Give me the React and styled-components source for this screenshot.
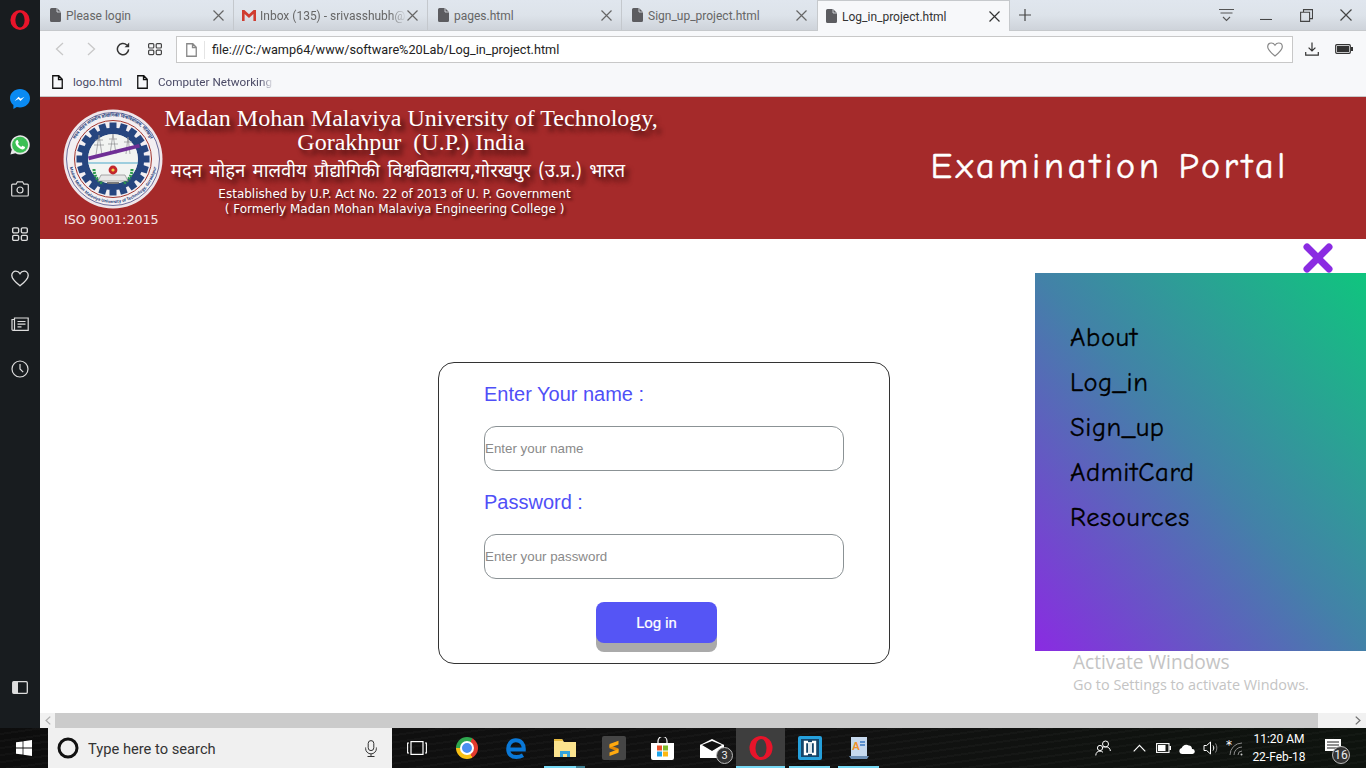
import React from 'react';
import styled, { createGlobalStyle } from 'styled-components';

const GlobalStyle = createGlobalStyle`
  html, body {
    margin: 0;
    padding: 0;
    height: 100%;
    overflow: hidden;
    background: #fff;
    font-family: "Roboto", "Liberation Sans", sans-serif;
  }
  * { box-sizing: border-box; }
`;

const COMIC = `"Comic Sans MS", "Comic Neue", cursive`;

// Window frame
const Screen = styled.div`
  width: 1366px;
  height: 768px;
  display: flex;
  flex-direction: column;
  overflow: hidden;
`;

const Upper = styled.div`
  flex: 1;
  display: flex;
  min-height: 0;
`;

const Sidebar = styled.div`
  width: 40px;
  flex: none;
  background: #181c1f;
  display: flex;
  flex-direction: column;
  align-items: center;
  padding-top: 8px;
`;

const SideSlot = styled.div`
  height: ${(p) => p.$h || 45}px;
  display: flex;
  align-items: center;
  justify-content: center;
  margin-top: ${(p) => p.$top || 0}px;
  margin-bottom: ${(p) => (p.$push ? 'auto' : '0')};
`;

const Browser = styled.div`
  flex: 1;
  min-width: 0;
  display: flex;
  flex-direction: column;
`;

// Tabs
const TabStrip = styled.div`
  height: 31px;
  flex: none;
  display: flex;
  background: linear-gradient(#e0e6ee, #dde3ea 50%, #ced3da);
  border-bottom: 1px solid #c6c9cc;
`;

const Tab = styled.div`
  width: ${(p) => (p.$active ? 193 : 194)}px;
  height: ${(p) => (p.$active ? 31 : 30)}px;
  flex: none;
  display: flex;
  align-items: center;
  padding: 0 9px 0 ${(p) => (p.$mail || p.$active ? 8 : 10)}px;
  position: relative;
  z-index: ${(p) => (p.$active ? 1 : 0)};
  margin-left: ${(p) => (p.$active ? 1 : 0)}px;
  background: ${(p) => (p.$active ? '#f7f8fa' : 'transparent')};
  border: ${(p) => (p.$active ? '1px solid #c6c9cc' : 'none')};
  border-bottom: none;
  border-right: ${(p) => (p.$active ? '1px solid #c6c9cc' : p.$sep ? '1px solid #c4c8cd' : 'none')};
  color: ${(p) => (p.$active ? '#333' : '#666')};
`;

const TabTitle = styled.div`
  flex: 1;
  min-width: 0;
  margin-left: ${(p) => (p.$mail ? 4 : 5)}px;
  padding-top: 1px;
  font-size: 12px;
  white-space: nowrap;
  overflow: hidden;
  mask-image: ${(p) => (p.$mail ? 'linear-gradient(90deg, #000 88%, transparent)' : 'none')};
`;

const NewTab = styled.div`
  width: 30px;
  display: flex;
  align-items: center;
  justify-content: center;
`;

const WindowControls = styled.div`
  margin-left: auto;
  display: flex;
  align-items: center;
`;

const WindowButton = styled.div`
  width: 40px;
  height: 30px;
  display: flex;
  align-items: center;
  justify-content: center;
`;

// Address bar
const Toolbar = styled.div`
  height: 36px;
  flex: none;
  background: #f7f8fa;
  display: flex;
  align-items: center;
  padding-left: 3px;
`;

const NavButton = styled.div`
  width: 32px;
  height: 27px;
  display: flex;
  align-items: center;
  justify-content: center;
`;

const AddressBar = styled.div`
  width: 1117px;
  height: 27px;
  margin: 1px 0 0 5px;
  background: #fff;
  border: 1px solid #c8c8c8;
  display: flex;
  align-items: center;
  padding: 0 9px;
`;

const Url = styled.div`
  flex: 1;
  margin-left: 7px;
  padding-left: 7px;
  border-left: 1px solid #e4e4e4;
  font-size: 12.7px;
  line-height: 18px;
  color: #222;
`;

const ToolbarEnd = styled.div`
  display: flex;
  align-items: center;
  gap: 16px;
  margin-left: 12px;
`;

const Bookmarks = styled.div`
  height: 30px;
  flex: none;
  background: #f7f8fa;
  border-bottom: 1px solid #c8c8c8;
  display: flex;
  align-items: center;
  padding-left: 12px;
`;

const Bookmark = styled.div`
  width: ${(p) => p.$w}px;
  display: flex;
  align-items: center;
  gap: 10px;
  font-size: 11.7px;
  color: #4a4a66;
  white-space: nowrap;
  overflow: hidden;
  mask-image: ${(p) => (p.$fade ? 'linear-gradient(90deg, #000 90%, transparent)' : 'none')};
  svg { flex: none; }
`;

// Page
const Page = styled.div`
  flex: 1;
  min-height: 0;
  position: relative;
  background: #fff;
`;

const Banner = styled.header`
  height: 142px;
  background: #a52a2a;
  display: flex;
  padding: 12px 77px 0 23px;
  color: #fff;
`;

const LogoBlock = styled.div`
  width: 101px;
  flex: none;
  display: flex;
  flex-direction: column;
`;

const Iso = styled.div`
  font-family: "DejaVu Sans", sans-serif;
  font-size: 12.7px;
  line-height: 14px;
  margin-top: 4px;
  padding-left: 1px;
  white-space: nowrap;
  color: #f4e6e6;
`;

const BannerText = styled.div`
  width: 494px;
  flex: none;
  text-align: center;
  text-shadow: 4px 5px 5px #3a0b0b;
`;

const UniName = styled.div`
  font-family: "Liberation Serif", serif;
  font-size: 24px;
  line-height: 24px;
  margin-top: -3px;
  white-space: pre-wrap;
  & + & { margin-top: 0; }
`;

const HindiName = styled.div`
  font-family: "Noto Sans Devanagari", "Noto Serif Devanagari", "Noto Sans", serif;
  font-size: 18.5px;
  word-spacing: 2.5px;
  line-height: 28px;
  margin: 5px 26px 0 0;
  white-space: nowrap;
`;

const SmallLine = styled.div`
  font-family: "DejaVu Sans", sans-serif;
  font-size: 12px;
  line-height: 15px;
  white-space: nowrap;
  margin-right: 33px;
  text-shadow: 2px 2px 3px #3a0b0b;
`;

const PortalTitle = styled.div`
  margin-left: auto;
  align-self: flex-start;
  margin-top: 35px;
  font-family: ${COMIC};
  font-size: 36px;
  line-height: 46px;
  letter-spacing: 3.8px;
  -webkit-text-stroke: 0.5px #fff;
  white-space: nowrap;
`;

const LoginCard = styled.form`
  width: 452px;
  height: 302px;
  margin: 123px 0 0 398px;
  border: 1px solid #333;
  border-radius: 16px;
  padding: 19px 0 0 45px;
  background: #fff;
  font-family: "Liberation Sans", Arial, sans-serif;
`;

const FieldLabel = styled.label`
  display: block;
  font-size: 20px;
  line-height: 24px;
  color: #4f4ff7;
`;

const TextInput = styled.input`
  display: block;
  width: 360px;
  height: 45px;
  margin: 20px 0 19px;
  padding: 0;
  border: 1px solid #8b9295;
  border-radius: 12px;
  background: #fff;
  font-family: "Liberation Sans", Arial, sans-serif;
  font-size: 13.33px;
  outline: none;
  &::placeholder { color: #8a8a8a; opacity: 1; }
`;

const LoginButton = styled.button`
  display: block;
  width: 121px;
  height: 41px;
  margin: 23px 0 0 112px;
  border: none;
  border-radius: 8px;
  background: #5555f5;
  box-shadow: 0 9px 0 #aaaaaa;
  color: #fff;
  font-family: "Roboto", "Liberation Sans", sans-serif;
  font-size: 15px;
  -webkit-text-stroke: 0.2px #fff;
`;

const CloseMenu = styled.div`
  position: absolute;
  top: 145px;
  right: 32px;
  width: 32px;
  height: 32px;
`;

const SlideMenu = styled.nav`
  position: absolute;
  top: 176px;
  right: 0;
  width: 331px;
  height: 378px;
  padding: 42px 0 0 35px;
  background: linear-gradient(to bottom left, #0fc57e, #4381a8 50%, #8a2be2);
  display: flex;
  flex-direction: column;
`;

const MenuLink = styled.a`
  height: 45px;
  display: flex;
  align-items: center;
  font-family: ${COMIC};
  font-size: 26.6px;
  letter-spacing: 0.6px;
  -webkit-text-stroke: 0.3px #000;
  color: #000;
`;

const Watermark = styled.div`
  position: absolute;
  top: 552px;
  left: 1033px;
  color: #c4c4c4;
  white-space: nowrap;
  font-family: "Open Sans", sans-serif;
`;

const WatermarkTitle = styled.div`
  font-size: 19.1px;
  line-height: 26px;
`;

const WatermarkText = styled.div`
  font-size: 14.4px;
  line-height: 20px;
`;

const ScrollBar = styled.div`
  height: 15px;
  flex: none;
  display: flex;
  background: #f1f1f1;
`;

const ScrollEnd = styled.div`
  width: ${(p) => p.$w}px;
  display: flex;
  align-items: center;
  justify-content: ${(p) => (p.$right ? 'flex-end' : 'center')};
  padding-right: ${(p) => (p.$right ? 5 : 0)}px;
`;

const ScrollThumb = styled.div`
  flex: 1;
  background: #cbcbcb;
`;

// Taskbar
const Taskbar = styled.div`
  height: 40px;
  flex: none;
  display: flex;
  background:
    repeating-linear-gradient(172deg, transparent 0 5px, rgba(255, 255, 255, 0.025) 5px 7px),
    linear-gradient(90deg, #0d0d0d, #111 60%, #0e130e);
  color: #fff;
`;

const StartButton = styled.div`
  width: 48px;
  display: flex;
  align-items: center;
  justify-content: center;
`;

const SearchBox = styled.div`
  width: 344px;
  background: #f0f0f0;
  display: flex;
  align-items: center;
  padding: 0 15px 0 9px;
  color: #333;
  font-size: 14.7px;
`;

const SearchText = styled.div`
  flex: 1;
  margin-left: 9px;
  padding-top: 2px;
`;

const TaskSlot = styled.div`
  width: ${(p) => p.$w || 49}px;
  flex: none;
  position: relative;
  display: flex;
  align-items: center;
  justify-content: center;
  background: ${(p) => (p.$active ? '#3e3e3e' : 'transparent')};
  &::after {
    content: '';
    display: ${(p) => (p.$running ? 'block' : 'none')};
    position: absolute;
    bottom: 0;
    left: ${(p) => (p.$active ? 0 : 4)}px;
    right: ${(p) => (p.$active ? 0 : 4)}px;
    height: 2px;
    background: ${(p) => (p.$stacked ? 'linear-gradient(90deg, #76d9f5 78%, #3f7f92 78%)' : '#76d9f5')};
  }
`;

const CountBadge = styled.div`
  position: absolute;
  right: ${(p) => p.$right}px;
  bottom: ${(p) => p.$bottom}px;
  width: ${(p) => p.$size}px;
  height: ${(p) => p.$size}px;
  border-radius: 50%;
  border: 1px solid #bbb;
  background: #333;
  color: #eee;
  font-size: ${(p) => p.$font}px;
  display: flex;
  align-items: center;
  justify-content: center;
`;

const ChromeIcon = styled.div`
  width: 22px;
  height: 22px;
  border-radius: 50%;
  background: conic-gradient(from 30deg, #e33b2e 0 120deg, #f9c014 120deg 240deg, #2fa84f 240deg 360deg);
  display: flex;
  align-items: center;
  justify-content: center;
  &::before {
    content: '';
    width: 10px;
    height: 10px;
    border-radius: 50%;
    background: #4a8ef0;
    border: 2px solid #fff;
    box-sizing: content-box;
  }
`;

const Tray = styled.div`
  margin-left: auto;
  display: flex;
  align-items: center;
`;

const TraySlot = styled.div`
  width: ${(p) => p.$w || 24}px;
  height: 40px;
  position: relative;
  display: flex;
  align-items: center;
  justify-content: center;
`;

const NotifySlot = styled.div`
  width: 55px;
  height: 40px;
  position: relative;
  display: flex;
  align-items: center;
  justify-content: center;
  padding: 0 11px 6px 0;
`;

const Clock = styled.div`
  width: 64px;
  text-align: center;
  font-size: 12px;
  line-height: 18px;
  color: #fff;
`;

// Icons
const Svg = ({ s = 16, w, h, vb, children, ...rest }) => (
  <svg width={w || s} height={h || s} viewBox={vb || `0 0 ${w || s} ${h || s}`} fill="none" {...rest}>
    {children}
  </svg>
);

const DocSolid = () => (
  <Svg w={11} h={14}>
    <path d="M1.5 0H7l4 4v8.5a1.5 1.5 0 0 1-1.5 1.5h-8A1.5 1.5 0 0 1 0 12.5v-11A1.5 1.5 0 0 1 1.5 0Z" fill="#5c5c60" />
    <path d="M7 0v4h4" stroke="#e4e8ee" strokeWidth=".8" />
  </Svg>
);

const DocLine = ({ color = '#111' }) => (
  <Svg w={11} h={14}>
    <path d="M.75.75H6.8L10.25 4.2v9.05H.75ZM6.5.75V4.5h3.75" stroke={color} strokeWidth="1.3" />
  </Svg>
);

const Gmail = () => (
  <Svg w={14} h={11}>
    <path d="M0 0h2.4L7 4.2 11.6 0H14v11h-2.6V4L7 8 2.6 4v7H0Z" fill="#d03c30" />
  </Svg>
);

const Cross = ({ s = 11, color = '#666', sw = 1.2 }) => (
  <Svg s={s}>
    <path d={`M.5.5 ${s - 0.5} ${s - 0.5}M${s - 0.5} .5 .5 ${s - 0.5}`} stroke={color} strokeWidth={sw} />
  </Svg>
);

const Chevron = ({ dir, color = '#c8c8c8', w = 9, h = 14, sw = 1.3 }) => (
  <svg width={w} height={h} viewBox="0 0 9 14" fill="none">
    <path d={dir === 'left' ? 'M8 1 1.5 7 8 13' : 'M1 1l6.5 6L1 13'} stroke={color} strokeWidth={sw} />
  </svg>
);

const Grid = ({ color = '#444', s = 14 }) => (
  <Svg s={14} width={s} height={s} vb="0 0 14 14">
    <rect x=".6" y="1.6" width="5.2" height="4.4" rx="1" stroke={color} strokeWidth="1.2" />
    <rect x="8.2" y="1.6" width="5.2" height="4.4" rx="1" stroke={color} strokeWidth="1.2" />
    <rect x=".6" y="8.2" width="5.2" height="4.4" rx="1" stroke={color} strokeWidth="1.2" />
    <rect x="8.2" y="8.2" width="5.2" height="4.4" rx="1" stroke={color} strokeWidth="1.2" />
  </Svg>
);

const Heart = ({ color = '#888', w = 16, h = 15, sw = 1.2 }) => (
  <Svg w={16} h={15} width={w} height={h} vb="0 0 16 15">
    <path d="M8 14C3 10 .7 7.8.7 4.8.7 2.6 2.3 1 4.3 1 5.8 1 7.2 1.9 8 3.2 8.8 1.9 10.2 1 11.7 1c2 0 3.6 1.6 3.6 3.8C15.3 7.8 13 10 8 14Z" stroke={color} strokeWidth={sw} />
  </Svg>
);

const OperaMark = ({ s = 20, hole = '#181c1f' }) => (
  <Svg s={20} width={s} height={s} vb="0 0 20 20">
    <ellipse cx="10" cy="10" rx="9.6" ry="10" fill="#e8142a" />
    <ellipse cx="10" cy="10" rx="4.6" ry="7.6" fill={hole} />
  </Svg>
);

const Messenger = () => (
  <Svg s={20}>
    <path d="M10 0C4.5 0 0 4 0 9.2c0 2.8 1.3 5.2 3.4 6.9V20l3.4-1.9c1 .3 2.1.4 3.2.4 5.5 0 10-4.1 10-9.3S15.5 0 10 0Z" fill="#0a8af2" />
    <path d="m4.6 12 4-4.3 2 2.1 3.9-2.1-4 4.3-2-2.1Z" fill="#fff" />
  </Svg>
);

const Whatsapp = () => (
  <Svg s={20}>
    <path d="M.4 19.6 1.8 14.6A9.6 9.6 0 1 1 5.4 18.2Z" fill="#e8e8e8" />
    <circle cx="10.1" cy="9.8" r="8" fill="#3cbf55" />
    <path d="M6.6 5.2c.4-.4 1-.4 1.2 0l.9 2c.1.4 0 .6-.2.9l-.5.6c.7 1.4 1.8 2.5 3.3 3.2l.7-.8c.2-.3.5-.3.8-.2l1.9.9c.4.2.4.6.2 1.2-.4 1-1.6 1.6-2.7 1.4-3.3-.6-6.1-3.3-6.7-6.3-.2-1.1.2-2.1 1.1-2.9Z" fill="#fff" />
  </Svg>
);

const Camera = () => (
  <Svg w={18} h={16}>
    <path d="M1.7 3.2h3.4L6.4.8h5.2l1.3 2.4h3.4a1 1 0 0 1 1 1V14a1 1 0 0 1-1 1H1.7a1 1 0 0 1-1-1V4.2a1 1 0 0 1 1-1Z" stroke="#ddd" strokeWidth="1.2" />
    <circle cx="9" cy="9" r="3" stroke="#ddd" strokeWidth="1.2" />
  </Svg>
);

const News = () => (
  <Svg w={18} h={14}>
    <path d="M3.5 2.5H1v9.8a1 1 0 0 0 1.2 1M3.5 1h13.7v12.3H2.2a1.3 1.3 0 0 0 1.3-1.3Z" stroke="#ddd" strokeWidth="1.2" />
    <path d="M6.5 4.5h8M6.5 7.2h8M6.5 9.9h4" stroke="#ddd" strokeWidth="1.2" />
  </Svg>
);

const ClockIcon = () => (
  <Svg s={18}>
    <circle cx="9" cy="9" r="8" stroke="#ddd" strokeWidth="1.2" />
    <path d="M9 4v5l3.2 3.2" stroke="#ddd" strokeWidth="1.2" />
  </Svg>
);

const PanelToggle = () => (
  <Svg w={16} h={13}>
    <rect x=".7" y=".7" width="14.6" height="11.6" rx="1" stroke="#ddd" strokeWidth="1.3" />
    <rect x="1" y="1" width="5" height="11" fill="#ddd" />
  </Svg>
);

const Reload = () => (
  <Svg s={14}>
    <path d="M12.6 7.4A5.6 5.6 0 1 1 10.8 3" stroke="#333" strokeWidth="1.5" />
    <path d="M13.2.6v4.6H8.6Z" fill="#333" />
  </Svg>
);

const Filter = () => (
  <Svg w={15} h={13}>
    <path d="M0 .5h15M1.5 4h12" stroke="#555" strokeWidth="1" />
    <path d="m4 8 3.5 3.5L11 8" stroke="#555" strokeWidth="1.1" />
  </Svg>
);

const Restore = () => (
  <Svg s={13}>
    <path d="M3.5 3V.6h9v9H10M.6 3.2h9v9.2h-9Z" stroke="#444" strokeWidth="1.1" />
  </Svg>
);

const Download = () => (
  <Svg w={14} h={14}>
    <path d="M7 .5v8.5M3.6 5.6 7 9l3.4-3.4M.7 10v3.2h12.6V10" stroke="#333" strokeWidth="1.2" />
  </Svg>
);

const Battery = () => (
  <Svg w={18} h={10}>
    <rect x=".7" y=".7" width="14.6" height="8.6" rx="1" stroke="#333" strokeWidth="1.2" />
    <rect x="2" y="2" width="12" height="6" fill="#333" />
    <rect x="16" y="3" width="2" height="4" fill="#333" />
  </Svg>
);

const UniversityLogo = () => {
  const teeth = Array.from({ length: 20 }, (_, i) => i * 18);
  return (
    <svg width="100" height="100" viewBox="0 0 100 100" fill="none">
      <circle cx="50" cy="50" r="49.5" fill="#efe6ea" />
      <circle cx="50" cy="50" r="46.5" fill="#f3eff2" stroke="#4a4f86" strokeWidth=".8" />
      <defs>
        <path id="ringTop" d="M7.5 50a42.5 42.5 0 0 1 85 0" />
        <path id="ringBottom" d="M6 50a44 44 0 0 0 88 0" />
      </defs>
      <text fontSize="4.4" fill="#203a78" fontFamily="Noto Sans Devanagari, Noto Sans, sans-serif" fontWeight="700">
        <textPath href="#ringTop" startOffset="50%" textAnchor="middle">
          मदन मोहन मालवीय प्रौद्योगिकी विश्वविद्यालय, गोरखपुर
        </textPath>
      </text>
      <text fontSize="4" fill="#203a78" fontFamily="Noto Sans, sans-serif" fontWeight="700">
        <textPath href="#ringBottom" startOffset="50%" textAnchor="middle">
          Madan Mohan Malaviya University of Technology, Gorakhpur
        </textPath>
      </text>
      <circle cx="50" cy="50" r="38.5" stroke="#a3372f" strokeWidth="1" />
      {teeth.map((a) => (
        <rect key={a} x="46.5" y="13.5" width="7" height="6" fill="#26457f" transform={`rotate(${a} 50 50)`} />
      ))}
      <circle cx="50" cy="50" r="28" stroke="#26457f" strokeWidth="6.5" />
      <circle cx="50" cy="50" r="25" fill="#f2f4f2" />
      <path d="M36 26l-3 20M36 26l3 20M32 31h8M31 36h10M50 25l-3 20M50 25l3 20M46 30h8M45 35h10M65 28l-2 17M65 28l2 17M61 33h8" stroke="#8d8d90" strokeWidth=".7" />
      <path d="M25 47.5 76 35l1 3.6-51 12.6Z" fill="#6f2f96" />
      <path d="M25 54h50" stroke="#4aa7c9" strokeWidth="1.2" />
      <path d="M31 60c0 7 4 12 9 15M69 60c0 7-4 12-9 15" stroke="#2e9a4e" strokeWidth="3" strokeDasharray="2 1" />
      <path d="M38 66h24l3 6H35Z" fill="#e7e7e7" stroke="#777" strokeWidth=".6" />
      <circle cx="50" cy="61" r="4.4" fill="#c3262c" />
      <circle cx="50" cy="61" r="1.6" fill="#f3cf42" />
      <path d="M44 74h12" stroke="#555" strokeWidth="1.5" />
    </svg>
  );
};

const WinLogo = () => (
  <Svg s={16}>
    <path d="M0 2.3 6.6 1.4v6.2H0ZM7.4 1.3 16 0v7.6H7.4ZM0 8.4h6.6v6.2L0 13.7ZM7.4 8.4H16V16l-8.6-1.3Z" fill="#fff" />
  </Svg>
);

const Mic = () => (
  <Svg w={12} h={17}>
    <rect x="3.2" y=".6" width="5.6" height="10" rx="2.8" stroke="#333" strokeWidth="1" />
    <path d="M.6 7.5v1a5.4 5.4 0 0 0 10.8 0v-1M6 14v2.5M2.5 16.5h7" stroke="#333" strokeWidth="1" />
  </Svg>
);

const TaskView = () => (
  <Svg w={20} h={14}>
    <rect x="4" y=".6" width="12" height="12.8" stroke="#fff" strokeWidth="1.2" />
    <path d="M2 2H.6v10H2M18 2h1.4v10H18" stroke="#fff" strokeWidth="1.1" />
  </Svg>
);

const EdgeLogo = () => (
  <Svg w={20} h={21}>
    <path d="M2.2 11.5h15.6c.2-5.4-3-9.3-8-9.3-4.6 0-7.6 3.8-7.6 8.8 0 5.4 3.4 8 8 8 2.6 0 4.8-.6 6.8-1.8" stroke="#0a78d7" strokeWidth="4" />
  </Svg>
);

const Explorer = () => (
  <Svg w={22} h={20}>
    <path d="M0 1h8l2 3h12v15H0Z" fill="#fbe38e" />
    <path d="M0 1h8l1 2H0Z" fill="#e5b93f" />
    <path d="M6 19v-6h10v6h-3v-3H9v3Z" fill="#35a4dc" />
  </Svg>
);

const Sublime = () => (
  <Svg s={24}>
    <rect width="24" height="24" rx="2" fill="#454545" />
    <path d="M7.5 9 16.5 12.5v3.3L7.5 12.3Z" fill="#e08806" />
    <path d="M7.5 8 16.5 4.7v3.7L7.5 11.7Z" fill="#ffa90f" />
    <path d="M7.5 16.4 16.5 13v3.7L7.5 20Z" fill="#ffa90f" />
  </Svg>
);

const Store = () => (
  <Svg w={23} h={23}>
    <path d="M7 6V4a4.5 4.5 0 0 1 9 0v2" stroke="#fff" strokeWidth="1.2" />
    <path d="M0 6h23v15a2 2 0 0 1-2 2H2a2 2 0 0 1-2-2Z" fill="#fff" />
    <rect x="6" y="8.5" width="5" height="5" fill="#e8502a" />
    <rect x="12" y="8.5" width="5" height="5" fill="#7fba2a" />
    <rect x="6" y="14.5" width="5" height="5" fill="#1ea4ea" />
    <rect x="12" y="14.5" width="5" height="5" fill="#fdb813" />
  </Svg>
);

const MailIcon = () => (
  <Svg w={24} h={19}>
    <path d="M0 6 12 0l12 6v13H0Z" fill="#fff" />
    <path d="m2 6 10-4 10 4-10 6Z" fill="#111" />
    <path d="M0 6l12 7 12-7" stroke="#fff" strokeWidth="1" />
  </Svg>
);

const Brackets = () => (
  <Svg s={24}>
    <rect width="24" height="24" rx="2" fill="#25a0dc" />
    <rect x="3" y="3" width="18" height="18" fill="#14456a" />
    <path d="M10 6H7v12h3M14 6h3v12h-3" stroke="#fff" strokeWidth="2.4" />
    <rect x="10" y="6" width="4" height="12" fill="#dfe8ee" />
  </Svg>
);

const WordPad = () => (
  <Svg w={20} h={22}>
    <path d="M2 0h16v19H2Z" fill="#c6d9ee" />
    <path d="M0 19h20l-2 3H2Z" fill="#6d8fb5" />
    <text x="3" y="13" fontSize="11" fontWeight="700" fill="#f0932b" fontFamily="Liberation Sans, sans-serif">A</text>
    <path d="M11 5h5M11 8h5" stroke="#3a78c2" strokeWidth="1.3" />
  </Svg>
);

const People = () => (
  <Svg w={16} h={16}>
    <circle cx="10.5" cy="4" r="3" stroke="#fff" strokeWidth="1" />
    <circle cx="5" cy="8" r="2.6" stroke="#fff" strokeWidth="1" />
    <path d="M.8 15.5c0-2.8 1.7-4.4 4.2-4.4 1.2 0 2.2.4 3 1.2M7 7.5c1-.5 2.2-.7 3.5-.7 2.8 0 4.7 1.5 4.9 4.2" stroke="#fff" strokeWidth="1" />
  </Svg>
);

const Caret = () => (
  <Svg w={13} h={8}>
    <path d="m.7 7.3 5.8-6 5.8 6" stroke="#fff" strokeWidth="1.1" />
  </Svg>
);

const TrayBattery = () => (
  <Svg w={15} h={10}>
    <rect x=".6" y=".6" width="12.4" height="8.8" stroke="#fff" strokeWidth="1.1" />
    <rect x="2" y="2" width="7.5" height="6" fill="#fff" />
    <rect x="13.4" y="3" width="1.6" height="4" fill="#fff" />
  </Svg>
);

const Cloud = () => (
  <Svg w={16} h={11}>
    <path d="M3 11a3 3 0 0 1-.4-5.9A5 5 0 0 1 9.8 2.4 3.6 3.6 0 0 1 13 6a2.5 2.5 0 0 1 .5 5Z" fill="#fff" />
  </Svg>
);

const Speaker = () => (
  <Svg w={16} h={14}>
    <path d="M1 4.5h2.6L7.5 1v12L3.6 9.5H1Z" stroke="#fff" strokeWidth="1" />
    <path d="M10 4.5c1 1.5 1 3.5 0 5" stroke="#fff" strokeWidth="1" />
    <path d="M12.5 2.5c1.8 2.8 1.8 6.2 0 9" stroke="#888" strokeWidth="1" />
  </Svg>
);

const Wifi = () => (
  <Svg w={18} h={18}>
    <text x="0" y="10" fontSize="12" fill="#fff" fontFamily="DejaVu Sans, sans-serif">*</text>
    <path d="M12 16A4 4 0 0 1 16 12M8 16A8 8 0 0 1 16 8M4 16A12 12 0 0 1 16 4" stroke="#8b8b8b" strokeWidth="1" />
    <circle cx="15.5" cy="15.5" r="1" fill="#ccc" />
  </Svg>
);

const NoteIcon = () => (
  <Svg w={16} h={12}>
    <rect width="16" height="12" fill="#fff" />
    <path d="M2 3h12M2 6h12M2 9h12" stroke="#222" strokeWidth="1" />
  </Svg>
);

const tabs = [
  { title: 'Please login', sep: true },
  { title: 'Inbox (135) - srivasshubh@', mail: true, sep: true },
  { title: 'pages.html', sep: true },
  { title: 'Sign_up_project.html' },
  { title: 'Log_in_project.html', active: true },
];

const menuItems = ['About', 'Log_in', 'Sign_up', 'AdmitCard', 'Resources'];

const App = () => {
  return (
    <Screen>
      <GlobalStyle />
      <Upper>
        <Sidebar>
          <SideSlot $h={24}><OperaMark /></SideSlot>
          <SideSlot $top={44}><Messenger /></SideSlot>
          <SideSlot $h={47}><Whatsapp /></SideSlot>
          <SideSlot $top={-2}><Camera /></SideSlot>
          <SideSlot><Grid color="#ddd" s={16} /></SideSlot>
          <SideSlot><Heart color="#ddd" w={18} h={17} /></SideSlot>
          <SideSlot><News /></SideSlot>
          <SideSlot $push><ClockIcon /></SideSlot>
          <SideSlot $h={48}><PanelToggle /></SideSlot>
          <SideSlot $h={17} />
        </Sidebar>

        <Browser>
          <TabStrip>
            {tabs.map((t) => (
              <Tab key={t.title} $active={t.active} $mail={t.mail} $sep={t.sep}>
                {t.mail ? <Gmail /> : <DocSolid />}
                <TabTitle $mail={t.mail}>{t.title}</TabTitle>
                <Cross color={t.active ? '#333' : '#666'} />
              </Tab>
            ))}
            <NewTab>
              <Svg s={12}><path d="M6 0v12M0 6h12" stroke="#444" strokeWidth="1.2" /></Svg>
            </NewTab>
            <WindowControls>
              <WindowButton><Filter /></WindowButton>
              <WindowButton><Svg w={12} h={10}><path d="M0 9.5h12" stroke="#444" strokeWidth="1.1" /></Svg></WindowButton>
              <WindowButton><Restore /></WindowButton>
              <WindowButton><Cross s={12} color="#444" /></WindowButton>
            </WindowControls>
          </TabStrip>

          <Toolbar>
            <NavButton><Chevron dir="left" /></NavButton>
            <NavButton><Chevron dir="right" /></NavButton>
            <NavButton><Reload /></NavButton>
            <NavButton><Grid /></NavButton>
            <AddressBar>
              <DocLine color="#888" />
              <Url>file:///C:/wamp64/www/software%20Lab/Log_in_project.html</Url>
              <Heart />
            </AddressBar>
            <ToolbarEnd>
              <Download />
              <Battery />
            </ToolbarEnd>
          </Toolbar>

          <Bookmarks>
            <Bookmark $w={85}><DocLine /> logo.html</Bookmark>
            <Bookmark $w={137} $fade><DocLine /> Computer Networking</Bookmark>
          </Bookmarks>

          <Page>
            <Banner>
              <LogoBlock>
                <UniversityLogo />
                <Iso>ISO 9001:2015</Iso>
              </LogoBlock>
              <BannerText>
                <UniName>Madan Mohan Malaviya University of Technology,</UniName>
                <UniName>{'Gorakhpur  (U.P.) India'}</UniName>
                <HindiName>मदन मोहन मालवीय प्रौद्योगिकी विश्वविद्यालय,गोरखपुर (उ.प्र.) भारत</HindiName>
                <SmallLine>Established by U.P. Act No. 22 of 2013 of U. P. Government</SmallLine>
                <SmallLine>( Formerly Madan Mohan Malaviya Engineering College )</SmallLine>
              </BannerText>
              <PortalTitle>Examination Portal</PortalTitle>
            </Banner>

            <LoginCard onSubmit={(e) => e.preventDefault()}>
              <FieldLabel>Enter Your name :</FieldLabel>
              <TextInput placeholder="Enter your name" />
              <FieldLabel>Password :</FieldLabel>
              <TextInput type="password" placeholder="Enter your password" />
              <LoginButton>Log in</LoginButton>
            </LoginCard>

            <CloseMenu>
              <Svg s={32}><path d="M5 5l22 22M27 5 5 27" stroke="#8a2be2" strokeWidth="7" strokeLinecap="round" /></Svg>
            </CloseMenu>
            <SlideMenu>
              {menuItems.map((item) => (
                <MenuLink key={item}>{item}</MenuLink>
              ))}
            </SlideMenu>
            <Watermark>
              <WatermarkTitle>Activate Windows</WatermarkTitle>
              <WatermarkText>Go to Settings to activate Windows.</WatermarkText>
            </Watermark>
          </Page>

          <ScrollBar>
            <ScrollEnd $w={15}><Chevron dir="left" color="#b0b0b0" w={6} h={9} sw={2} /></ScrollEnd>
            <ScrollThumb />
            <ScrollEnd $w={48} $right><Chevron dir="right" color="#707070" w={6} h={9} sw={2} /></ScrollEnd>
          </ScrollBar>
        </Browser>
      </Upper>

      <Taskbar>
        <StartButton><WinLogo /></StartButton>
        <SearchBox>
          <Svg s={22}><circle cx="11" cy="11" r="9" stroke="#111" strokeWidth="3" /></Svg>
          <SearchText>Type here to search</SearchText>
          <Mic />
        </SearchBox>
        <TaskSlot $w={50}><TaskView /></TaskSlot>
        <TaskSlot><ChromeIcon /></TaskSlot>
        <TaskSlot><EdgeLogo /></TaskSlot>
        <TaskSlot $running $stacked><Explorer /></TaskSlot>
        <TaskSlot><Sublime /></TaskSlot>
        <TaskSlot><Store /></TaskSlot>
        <TaskSlot>
          <MailIcon />
          <CountBadge $right={3} $bottom={4} $size={17} $font={11}>3</CountBadge>
        </TaskSlot>
        <TaskSlot $running $active><OperaMark s={24} hole="#3e3e3e" /></TaskSlot>
        <TaskSlot $running><Brackets /></TaskSlot>
        <TaskSlot $running><WordPad /></TaskSlot>
        <Tray>
          <TraySlot $w={48}><People /></TraySlot>
          <TraySlot><Caret /></TraySlot>
          <TraySlot><TrayBattery /></TraySlot>
          <TraySlot><Cloud /></TraySlot>
          <TraySlot><Speaker /></TraySlot>
          <TraySlot><Wifi /></TraySlot>
          <Clock>
            <div>11:20 AM</div>
            <div>22-Feb-18</div>
          </Clock>
          <NotifySlot>
            <NoteIcon />
            <CountBadge $right={16} $bottom={4} $size={18} $font={12}>16</CountBadge>
          </NotifySlot>
        </Tray>
      </Taskbar>
    </Screen>
  );
};

export default App;
